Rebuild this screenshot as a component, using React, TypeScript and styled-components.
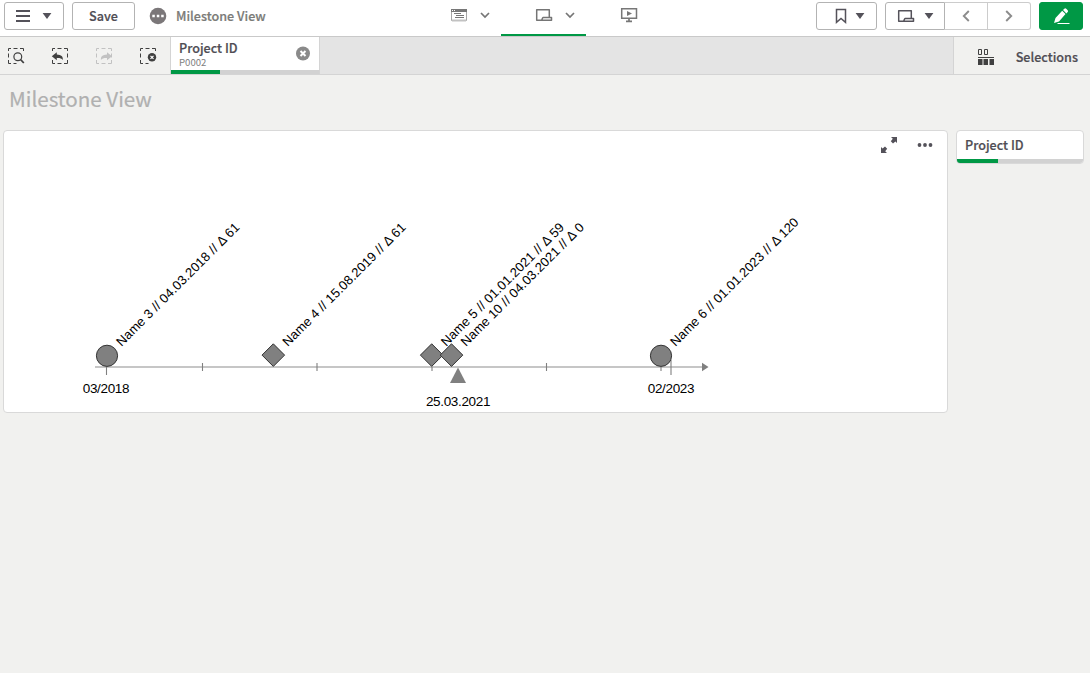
import React from 'react';
import styled, { createGlobalStyle } from 'styled-components';

const GlobalStyle = createGlobalStyle`
  * { box-sizing: border-box; }
  body {
    margin: 0;
    background: #f1f1ef;
    color: #4f4d54;
    font-family: "Noto Sans CJK SC", "Noto Sans", sans-serif;
    overflow: hidden;
  }
  button { font: inherit; color: inherit; padding: 0; margin: 0; }
  svg { display: block; flex: none; }
`;

const Page = styled.div`
  height: 673px;
  display: flex;
  flex-direction: column;
`;

const Toolbar = styled.header`
  height: 37px;
  flex: none;
  display: grid;
  grid-template-columns: 416px 255px 1fr;
  background: #fff;
  border-bottom: 1px solid #c9c9c9;
`;

const Group = styled.div<{ $end?: boolean }>`
  display: flex;
  align-items: flex-start;
  justify-content: ${(p) => (p.$end ? 'flex-end' : 'flex-start')};
  padding: 2px 7px 0 4px;
  gap: 8px;
`;

const Button = styled.button<{ $w: number; $primary?: boolean; $shift?: number }>`
  width: ${(p) => p.$w}px;
  height: 28px;
  display: flex;
  align-items: center;
  justify-content: center;
  padding-left: ${(p) => p.$shift ?? 0}px;
  border: 1px solid ${(p) => (p.$primary ? '#009845' : '#b3b3b3')};
  border-radius: 3px;
  background: ${(p) => (p.$primary ? '#009845' : '#fff')};
`;

const ButtonGroup = styled.div`
  display: flex;
  ${Button} { border-radius: 0; }
  ${Button}:first-child { border-radius: 3px 0 0 3px; }
  ${Button}:last-child { border-radius: 0 3px 3px 0; }
  ${Button} + ${Button} { border-left: 0; border-color: #ccc; }
`;

const Label = styled.span<{ $color?: string }>`
  font-size: 12.6px;
  font-weight: 500;
  line-height: 18px;
  white-space: nowrap;
  -webkit-text-stroke: 0.2px currentColor;
  color: ${(p) => p.$color ?? '#4f4d54'};
`;

const AppTitle = styled.div`
  height: 28px;
  display: flex;
  align-items: center;
  gap: 9px;
  margin-left: 6px;
`;

const Tabs = styled.nav`
  display: flex;
`;

const Tab = styled.div<{ $active?: boolean; $menu?: boolean }>`
  width: 85px;
  height: 36px;
  display: flex;
  align-items: flex-start;
  justify-content: ${(p) => (p.$menu ? 'flex-end' : 'center')};
  padding: 7px ${(p) => (p.$menu ? 11 : 0)}px 0 0;
  border-bottom: 2px solid ${(p) => (p.$active ? '#009845' : 'transparent')};
`;

const SelectionBar = styled.div`
  height: 38px;
  flex: none;
  display: flex;
  background: #f1f1ef;
  border-bottom: 1px solid #d4d4d4;
`;

const Tools = styled.div`
  width: 171px;
  display: flex;
  align-items: center;
  padding-left: 7px;
  gap: 26px;
  border-right: 1px solid #d4d4d4;
`;

const Field = styled.div`
  width: 149px;
  display: flex;
  flex-direction: column;
  background: #fff;
  border-right: 1px solid #d4d4d4;
`;

const FieldBody = styled.div`
  flex: 1;
  display: flex;
  justify-content: space-between;
  padding: 2px 8px 0;
`;

const FieldText = styled.div`
  display: flex;
  flex-direction: column;
`;

const FieldValue = styled.span`
  font-size: 9.6px;
  line-height: 11px;
  color: #808080;
`;

const ClearButton = styled.div`
  padding-top: 7px;
`;

const Progress = styled.div`
  height: 4px;
  flex: none;
  background: #d2d2d2;
`;

const ProgressFill = styled.div<{ $w: number }>`
  width: ${(p) => p.$w}px;
  height: 4px;
  background: #009845;
`;

const Empty = styled.div`
  flex: 1;
  background: #e4e4e4;
`;

const SelectionsLink = styled.div`
  width: 137px;
  display: flex;
  align-items: center;
  justify-content: space-between;
  padding: 2px 12px 0 23px;
  border-left: 1px solid #d4d4d4;
`;

const SheetTitle = styled.h1`
  margin: 0;
  height: 55px;
  padding: 8px 0 0 9px;
  font-size: 20.6px;
  font-weight: 400;
  line-height: 30px;
  color: #b0b0b0;
  -webkit-text-stroke: 0.2px currentColor;
`;

const Sheet = styled.main`
  display: flex;
  align-items: flex-start;
  gap: 8px;
  padding-left: 3px;
`;

const Card = styled.section<{ $w: number; $h: number }>`
  width: ${(p) => p.$w}px;
  height: ${(p) => p.$h}px;
  display: flex;
  flex-direction: column;
  overflow: hidden;
  background: #fff;
  border: 1px solid #d9d9d9;
  border-radius: 4px;
`;

const CardTools = styled.div`
  height: 29px;
  display: flex;
  justify-content: flex-end;
  align-items: center;
  gap: 19px;
  padding: 0 14px 2px 0;
`;

const FilterTitle = styled.div`
  flex: 1;
  padding: 5px 0 0 8px;
  display: flex;
`;

const CaretShape = styled.svg<{ $left: number }>`
  margin-left: ${(p) => p.$left}px;
`;

const Caret = ({ left = 12 }: { left?: number }) => (
  <CaretShape $left={left} width="10" height="6" viewBox="0 0 10 6">
    <path d="M.6 0h8.8L5 6z" fill="#54525a" />
  </CaretShape>
);

const ChevronShape = styled.svg`
  margin: 5px 0 0 12px;
`;

const Chevron = () => (
  <ChevronShape width="10" height="7" viewBox="0 0 10 7">
    <path d="M1 1l4 4 4-4" fill="none" stroke="#757575" strokeWidth="1.7" />
  </ChevronShape>
);

const SheetIcon = ({ color = '#54525a' }: { color?: string }) => (
  <svg width="18" height="16" viewBox="0 0 18 16">
    <path
      d="M6.500 13.300h-4.800V2.700h12.600v7.800M8 10.600h8.500v2.600H6.300c1-.4.9-2.100 1.700-2.600z"
      fill="none"
      stroke={color}
      strokeWidth="1.500"
      strokeLinejoin="round"
    />
  </svg>
);

const fullFrame = 'M1.500 4V1.500H4M6.500 1.500h4M13 1.500h3.500V4M1.500 6.500v4M1.500 13v3.500H4M6.500 16.500h4M13 16.500h3.500V13M16.500 6.500v4';
const undoFrame = 'M1.500 4V1.500H4M6.500 1.500h4M13 1.500h3.500V4M1.500 13v3.500H4M6.500 16.500h4M13 16.500h3.500V13M16.500 6.500v4';
const badgeFrame = 'M1.500 4V1.500H4M6.500 1.500h4M13 1.500h3.500V4M1.500 6.500v4M1.500 13v3.500H4M6.500 16.500h3';

const Dashed = ({
  color = '#404040',
  frame = fullFrame,
  children,
}: {
  color?: string;
  frame?: string;
  children: React.ReactNode;
}) => (
  <svg width="18" height="18" viewBox="0 0 18 18">
    <path d={frame} fill="none" stroke={color} strokeWidth="1" />
    {children}
  </svg>
);

const undoArrow = 'M.8 9.300l5-4v2.200c4.500.1 6.500 2.200 6 5.600-1.200-1.800-3-2.200-6-2.100v2.300z';

const milestones = [
  { x: 107, shape: 'circle', text: 'Name 3 // 04.03.2018 // Δ 61' },
  { x: 273.3, shape: 'diamond', text: 'Name 4 // 15.08.2019 // Δ 61' },
  { x: 431.7, shape: 'diamond', text: 'Name 5 // 01.01.2021 // Δ 59' },
  { x: 451.5, shape: 'diamond', text: 'Name 10 // 04.03.2021 // Δ 0' },
  { x: 661, shape: 'circle', text: 'Name 6 // 01.01.2023 // Δ 120' },
];

const AxisText = styled.text<{ $spacing?: number; $size?: number }>`
  font-family: "Liberation Sans", Arial, sans-serif;
  font-size: ${(p) => p.$size ?? 13.5}px;
  letter-spacing: ${(p) => p.$spacing ?? -0.34}px;
  fill: #000;
`;

const Timeline = () => (
  <svg width="943" height="252" viewBox="4 160 943 252">
    <path d="M95 367H703" stroke="#b3b3b3" strokeWidth="1.6" />
    <path d="M702 362.700v8.600l6.500-4.300z" fill="#808080" />
    <path
      d="M106.500 367v8M202.500 363v8M317 363v8M432 367v4M546.500 363v8M661 367v4M671 360v15"
      stroke="#808080"
      strokeWidth="1.1"
    />
    {milestones.map((m) => (
      <g key={m.text}>
        {m.shape === 'circle' ? (
          <circle cx={m.x} cy="355.800" r="10.600" fill="#808080" stroke="#333" strokeWidth="1" />
        ) : (
          <path
            d={`M${m.x} 343.800l11.300 11.300-11.300 11.300-11.300-11.300z`}
            fill="#808080"
            stroke="#333"
            strokeWidth="1"
          />
        )}
        <AxisText $size={13} $spacing={0.09} transform={`translate(${m.x + 14.5} 347) rotate(-45)`}>
          {m.text}
        </AxisText>
      </g>
    ))}
    <path d="M458 367.500l8 15.500h-16z" fill="#808080" />
    <AxisText x="106" y="393" textAnchor="middle">03/2018</AxisText>
    <AxisText x="458" y="406" textAnchor="middle">25.03.2021</AxisText>
    <AxisText x="671" y="393" textAnchor="middle">02/2023</AxisText>
  </svg>
);

export default function App() {
  return (
    <Page>
      <GlobalStyle />
      <Toolbar>
        <Group>
          <Button $w={60}>
            <svg width="14" height="12" viewBox="0 0 14 12">
              <path d="M0 1h14M0 6h14M0 11h14" stroke="#54525a" strokeWidth="1.9" />
            </svg>
            <Caret />
          </Button>
          <Button $w={63}>
            <Label>Save</Label>
          </Button>
          <AppTitle>
            <svg width="18" height="18" viewBox="0 0 18 18">
              <circle cx="9" cy="9" r="8.300" fill="#7b7779" />
              <path d="M3.300 7.800h2.500v2.400H3.300zM7.800 7.800h2.500v2.400H7.800zM12.200 7.800h2.500v2.400h-2.500z" fill="#fff" />
            </svg>
            <Label $color="#7b7b78">Milestone View</Label>
          </AppTitle>
        </Group>
        <Tabs>
          <Tab $menu>
            <svg width="18" height="16" viewBox="0 0 18 16">
              <path d="M1.500 2.500h15v11h-15z" fill="#fff" stroke="#a6a6a6" />
              <path d="M1 2h16v3H1z" fill="#777" />
              <path d="M2 13.500h14" stroke="#c2c2c2" strokeWidth="2" />
              <path d="M4 6.500h7M6 8.500h8M5 10.500h9" stroke="#777" strokeWidth="1" />
              <path d="M2 3.500h1M4 3.500h1" stroke="#fff" />
            </svg>
            <Chevron />
          </Tab>
          <Tab $active $menu>
            <SheetIcon color="#757575" />
            <Chevron />
          </Tab>
          <Tab>
            <svg width="18" height="16" viewBox="0 0 18 16">
              <path d="M1.700 1.700h14.800v9.600H1.700z" fill="none" stroke="#777" strokeWidth="1.500" />
              <path d="M7 4v5l5-2.500z" fill="#777" />
              <path d="M9 11v3M6 14.300h6" stroke="#777" strokeWidth="1.700" />
            </svg>
          </Tab>
        </Tabs>
        <Group $end>
          <Button $w={61} $shift={6}>
            <svg width="12" height="16" viewBox="0 0 12 16">
              <path d="M1.500 1.500h9v12.800L6 10.500l-4.500 3.800z" fill="none" stroke="#54525a" strokeWidth="1.500" />
            </svg>
            <Caret left={8} />
          </Button>
          <ButtonGroup>
            <Button $w={60}>
              <SheetIcon />
              <Caret left={9} />
            </Button>
            <Button $w={43}>
              <svg width="8" height="12" viewBox="0 0 8 12">
                <path d="M6.800 1L1.800 6l5 5" fill="none" stroke="#8c8c8c" strokeWidth="1.900" />
              </svg>
            </Button>
            <Button $w={43}>
              <svg width="8" height="12" viewBox="0 0 8 12">
                <path d="M1.200 1l5 5-5 5" fill="none" stroke="#8c8c8c" strokeWidth="1.900" />
              </svg>
            </Button>
          </ButtonGroup>
          <Button $w={44} $primary $shift={2}>
            <svg width="18" height="18" viewBox="0 0 18 18">
              <path d="M1 16l1.500-5L9.200 3.800l3.300 3.300L6 14.400zM10 3l1.300-1.300q1-.8 1.900 0l1.500 1.500q.8 1 0 1.900L13.400 6.400z" fill="#fff" />
              <path d="M4.500 16.500h12" stroke="#fff" strokeWidth="1" />
            </svg>
          </Button>
        </Group>
      </Toolbar>

      <SelectionBar>
        <Tools>
          <Dashed frame={badgeFrame}>
            <circle cx="10.800" cy="9.700" r="3.900" fill="#f1f1ef" stroke="#404040" strokeWidth="1.200" />
            <path d="M13.500 12.500l3.300 3.500" stroke="#404040" strokeWidth="1.800" />
          </Dashed>
          <Dashed frame={undoFrame}>
            <path d={undoArrow} fill="#404040" />
          </Dashed>
          <Dashed color="#c2c2c2">
            <path d="M17 9.300l-5-4v2.200c-4.500.1-6.500 2.200-6 5.600 1.200-1.800 3-2.200 6-2.100v2.300z" fill="#c2c2c2" />
          </Dashed>
          <Dashed frame={badgeFrame}>
            <circle cx="13" cy="10.300" r="4.200" fill="#404040" />
            <path d="M11.500 8.800l3 3M14.500 8.800l-3 3" stroke="#fff" strokeWidth="1.200" />
          </Dashed>
        </Tools>
        <Field>
          <FieldBody>
            <FieldText>
              <Label>Project ID</Label>
              <FieldValue>P0002</FieldValue>
            </FieldText>
            <ClearButton>
              <svg width="15" height="15" viewBox="0 0 15 15">
                <circle cx="7" cy="7.500" r="7" fill="#8a8a8a" />
                <path d="M4.500 5l5 5M9.500 5l-5 5" stroke="#fff" strokeWidth="2" />
              </svg>
            </ClearButton>
          </FieldBody>
          <Progress>
            <ProgressFill $w={49} />
          </Progress>
        </Field>
        <Empty />
        <SelectionsLink>
          <svg width="18" height="16" viewBox="0 0 18 16">
            <path d="M1.500.5h3v5h-3zM7.500.5h3v5h-3z" fill="none" stroke="#404040" />
            <path d="M1 8.500h16" stroke="#404040" />
            <path d="M1 10h4.500v6H1zM6.500 10H11v6H6.500zM12.500 10H17v6h-4.500z" fill="#404040" />
          </svg>
          <Label>Selections</Label>
        </SelectionsLink>
      </SelectionBar>

      <SheetTitle>Milestone View</SheetTitle>

      <Sheet>
        <Card $w={945} $h={283}>
          <CardTools>
            <svg width="18" height="18" viewBox="0 0 18 18">
              <path d="M11 1h6v6l-1.600-1.500L13 7.500 10.800 5.300l2-2.600zM1 17v-6l1.600 1.500L5 10.500l2.200 2.200-2 2.600L7 17z" fill="#54525a" />
            </svg>
            <svg width="16" height="6" viewBox="0 0 16 6">
              <circle cx="2.500" cy="3" r="1.900" fill="#54525a" />
              <circle cx="8" cy="3" r="1.900" fill="#54525a" />
              <circle cx="13.500" cy="3" r="1.900" fill="#54525a" />
            </svg>
          </CardTools>
          <Timeline />
        </Card>
        <Card $w={128} $h={34}>
          <FilterTitle>
            <Label>Project ID</Label>
          </FilterTitle>
          <Progress>
            <ProgressFill $w={41} />
          </Progress>
        </Card>
      </Sheet>
    </Page>
  );
}
